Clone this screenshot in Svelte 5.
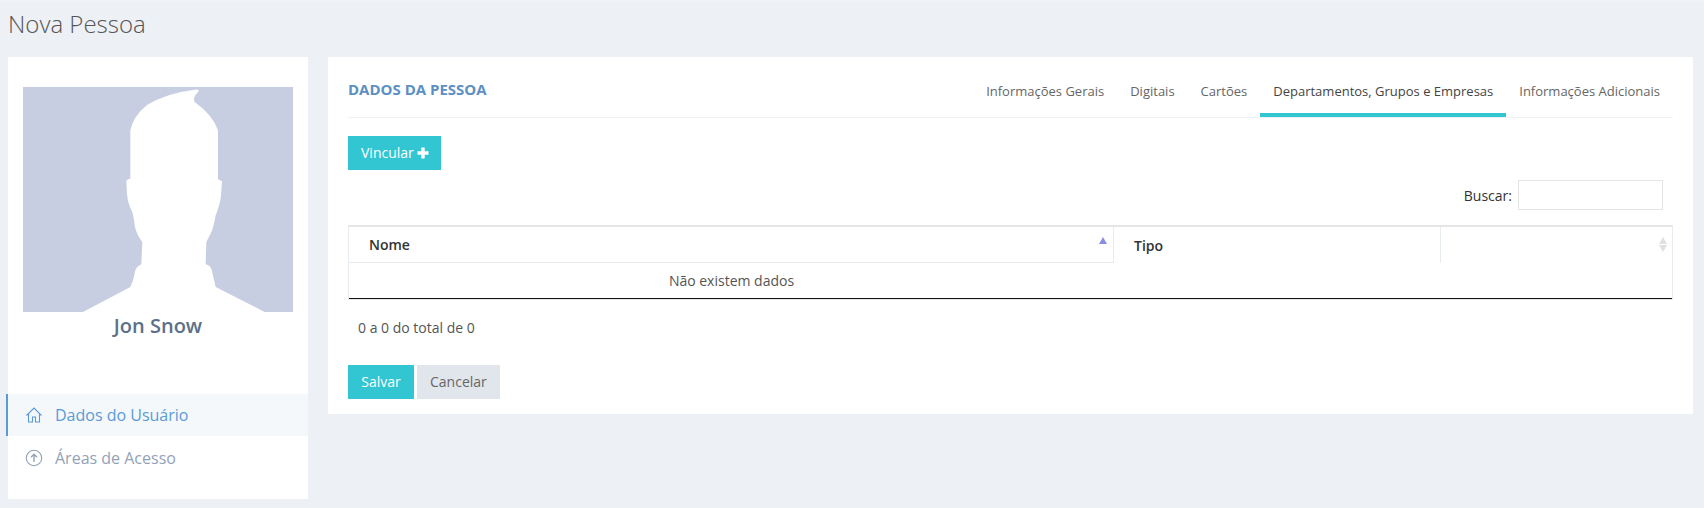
<script>
  const tabs = ['Informações Gerais', 'Digitais', 'Cartões', 'Departamentos, Grupos e Empresas', 'Informações Adicionais'];
  const activeTab = 3;
</script>

<div class="page">
  <h1>Nova Pessoa</h1>
  <div class="layout">
    <aside class="side">
      <svg class="avatar" viewBox="0 0 810 675" preserveAspectRatio="none" role="img" aria-label="Foto">
        <rect width="810" height="675" fill="#c8cee2" />
        <path fill="#fff" d="M180 675 L322 600 Q332 580 336 555 Q338 540 355 532 L358 465 Q342 445 336 420 Q332 390 328 375 Q314 350 312 320 L310 285 Q310 276 322 275 L322 130 Q330 88 372 54 Q430 18 515 8 Q530 6 526 14 Q508 30 515 45 Q570 85 585 130 L585 277 L597 283 L594 325 Q592 350 578 385 Q572 420 565 435 L550 465 L548 532 Q563 536 566 548 L578 600 L725 675 Z" />
      </svg>
      <div class="name">Jon Snow</div>
      <nav class="menu">
        <a class="item active" href="#dados">
          <svg viewBox="0 0 18 18" fill="none" stroke="currentColor" stroke-width="1.1"><path d="M1.5 9.5 9 2l7.5 7.5M3.5 8v8h4v-5h3v5h4V8" /></svg>
          <span>Dados do Usuário</span>
        </a>
        <a class="item" href="#areas">
          <svg viewBox="0 0 18 18" fill="none" stroke="currentColor" stroke-width="1.1"><circle cx="9" cy="9" r="7.7" /><path stroke-width="1.4" d="M9 13V5.5M6 8.3l3-3 3 3" /></svg>
          <span>Áreas de Acesso</span>
        </a>
      </nav>
    </aside>

    <main class="card">
      <header class="head">
        <div class="title">DADOS DA PESSOA</div>
        <ul class="tabs">
          {#each tabs as tab, i}
            <li class:on={i === activeTab}>{tab}</li>
          {/each}
        </ul>
      </header>

      <button class="btn primary add">Vincular <svg viewBox="0 0 12 12" fill="#fff"><path d="M4.3 0.5h3.4v3.8h3.8v3.4H7.7v3.8H4.3V7.7H0.5V4.3h3.8z" /></svg></button>

      <div class="search">
        <label for="q">Buscar:</label>
        <input id="q" type="text" />
      </div>

      <table>
        <thead>
          <tr>
            <th class="c1">Nome<span class="asc"></span></th>
            <th class="c2">Tipo</th>
            <th class="c3"><span class="both"></span></th>
          </tr>
        </thead>
        <tbody>
          <tr>
            <td class="empty">Não existem dados</td>
            <td></td>
            <td></td>
          </tr>
        </tbody>
      </table>

      <div class="info">0 a 0 do total de 0</div>

      <div class="actions">
        <button class="btn primary save">Salvar</button>
        <button class="btn cancel">Cancelar</button>
      </div>
    </main>
  </div>
</div>

<style>
  :global(body) {
    margin: 0;
    background: #edf0f5;
  }
  .page {
    height: 508px;
    box-sizing: border-box;
    padding: 8px 0 0 8px;
    background: linear-gradient(#f1f3f7, #edf0f5 4px);
    font-family: "Open Sans", sans-serif;
    font-size: 14px;
    color: #333;
    overflow: hidden;
  }
  h1 {
    margin: 0;
    height: 49px;
    font-size: 24px;
    line-height: 32px;
    font-weight: 300;
    color: #555;
  }
  .layout {
    display: flex;
    align-items: flex-start;
    gap: 20px;
  }
  .side {
    width: 300px;
    height: 442px;
    box-sizing: border-box;
    background: #fff;
    padding-top: 30px;
  }
  .avatar {
    display: block;
    width: 270px;
    height: 225px;
    margin-left: 15px;
  }
  .name {
    margin-top: 1px;
    text-align: center;
    font-size: 20px;
    line-height: 26px;
    font-weight: 600;
    color: #5b7089;
  }
  .menu {
    margin: 55px 0 0 -2px;
  }
  .item {
    display: flex;
    align-items: center;
    height: 42px;
    box-sizing: border-box;
    padding-left: 17px;
    border-left: 2px solid transparent;
    font-size: 16px;
    color: #93a2b8;
    text-decoration: none;
  }
  .item + .item {
    margin-top: 1px;
  }
  .item svg {
    width: 18px;
    height: 18px;
    margin-right: 12px;
  }
  .item.active {
    background: #f4f8fb;
    border-left-color: #5b9bd5;
    color: #5b9bd5;
  }
  .card {
    width: 1365px;
    height: 357px;
    box-sizing: border-box;
    background: #fff;
    padding: 0 20px;
  }
  .head {
    display: flex;
    justify-content: space-between;
    align-items: flex-end;
    height: 61px;
    box-sizing: border-box;
    border-bottom: 1px solid #eef1f5;
  }
  .title {
    align-self: flex-start;
    margin-top: 19px;
    font-size: 15px;
    line-height: 26px;
    font-weight: 700;
    color: #5c8fc4;
  }
  .tabs {
    display: flex;
    list-style: none;
    margin: 0;
    padding: 0;
  }
  .tabs li {
    padding: 0 13px;
    height: 44px;
    line-height: 36px;
    box-sizing: border-box;
    font-size: 13px;
    color: #666;
    border-bottom: 4px solid transparent;
  }
  .tabs li.on {
    color: #444;
    border-bottom-color: #32c5d2;
  }
  .btn {
    border: 0;
    border-radius: 0;
    height: 34px;
    padding: 0 13px 2px;
    font: inherit;
    font-size: 14px;
    color: #fff;
  }
  .primary {
    background: #32c5d2;
  }
  .save {
    width: 66px;
  }
  .cancel {
    background: #e1e5ec;
    color: #666;
  }
  .add {
    display: block;
    margin-top: 18px;
    padding-right: 12px;
  }
  .add svg {
    width: 12px;
    height: 12px;
    vertical-align: -1px;
  }
  .search {
    display: flex;
    justify-content: flex-end;
    align-items: center;
    gap: 6px;
    margin: 10px 10px 0 0;
    font-size: 14px;
  }
  .search input {
    width: 145px;
    height: 30px;
    box-sizing: border-box;
    border: 1px solid #e5e5e5;
    background: #fff;
    outline: none;
  }
  table {
    width: 1325px;
    margin-top: 15px;
    border-collapse: separate;
    border-spacing: 0;
    table-layout: fixed;
    border-top: 2px solid #e5e5e5;
    border-left: 1px solid #e7ecf1;
    border-right: 1px solid #e7ecf1;
    border-bottom: 1px solid #e7ecf1;
  }
  th {
    position: relative;
    height: 36px;
    box-sizing: border-box;
    padding: 0 20px;
    text-align: left;
    font-size: 14px;
    font-weight: 600;
    color: #333;
    border-right: 1px solid #e7ecf1;
  }
  .c1 {
    width: 765px;
    border-bottom: 1px solid #e7ecf1;
  }
  .c2 {
    width: 327px;
  }
  .c3 {
    border-right: 0;
  }
  td {
    height: 35px;
    box-sizing: content-box;
    padding: 0;
    font-size: 14px;
    line-height: 34px;
    border-bottom: 1px solid #111;
    color: #555;
  }
  .empty {
    text-align: center;
    padding-top: 1px;
    height: 34px;
  }
  .asc,
  .both {
    position: absolute;
    right: 6px;
    top: 10px;
    width: 0;
    height: 0;
    border-left: 4px solid transparent;
    border-right: 4px solid transparent;
    border-bottom: 7px solid #8a8ee0;
  }
  .both {
    right: 5px;
    top: 10px;
    border-bottom-color: #e0e0e0;
  }
  .both::after {
    content: "";
    position: absolute;
    left: -4px;
    top: 8px;
    width: 0;
    height: 0;
    border-left: 4px solid transparent;
    border-right: 4px solid transparent;
    border-top: 7px solid #e0e0e0;
  }
  .info {
    margin: 18px 0 0 10px;
    line-height: 20px;
    font-size: 14px;
    color: #555;
  }
  .actions {
    display: flex;
    gap: 3px;
    margin-top: 27px;
  }
</style>
